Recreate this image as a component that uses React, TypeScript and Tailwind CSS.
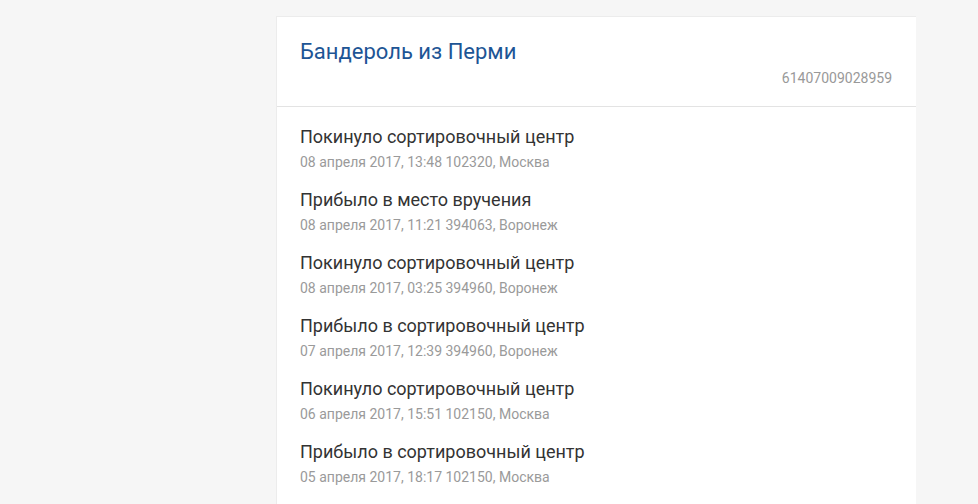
import React from 'react';

interface TrackEvent {
  status: string;
  date: string;
  place: string;
}

const EVENTS: TrackEvent[] = [
  { status: 'Покинуло сортировочный центр', date: '08 апреля 2017, 13:48', place: '102320, Москва' },
  { status: 'Прибыло в место вручения', date: '08 апреля 2017, 11:21', place: '394063, Воронеж' },
  { status: 'Покинуло сортировочный центр', date: '08 апреля 2017, 03:25', place: '394960, Воронеж' },
  { status: 'Прибыло в сортировочный центр', date: '07 апреля 2017, 12:39', place: '394960, Воронеж' },
  { status: 'Покинуло сортировочный центр', date: '06 апреля 2017, 15:51', place: '102150, Москва' },
  { status: 'Прибыло в сортировочный центр', date: '05 апреля 2017, 18:17', place: '102150, Москва' },
];

const App: React.FC = () => {
  return (
    <div className="min-h-screen bg-[#f6f6f6] pt-4 font-['Roboto',sans-serif]">
      <div className="ml-[276px] w-[640px] bg-white border border-[#ececec] border-r-0 border-b-0">
        <div className="pl-[23px] pr-6 pt-[21px] pb-[19px] border-b border-[#e3e3e3]">
          <h1 className="text-[22px] leading-[28px] text-[#1d5595]">Бандероль из Перми</h1>
          <div className="mt-[3px] text-right text-[14px] leading-[18px] text-[#999]">61407009028959</div>
        </div>
        <ul className="pl-[23px] pr-6 pt-[18px] pb-6 flex flex-col gap-[17px]">
          {EVENTS.map((e, i) => (
            <li key={i}>
              <div className="text-[18px] leading-6 text-[#333]">{e.status}</div>
              <div className="mt-[4px] text-[14px] leading-[18px] text-[#9a9a9a]">
                {e.date} {e.place}
              </div>
            </li>
          ))}
        </ul>
      </div>
    </div>
  );
};

export default App;
